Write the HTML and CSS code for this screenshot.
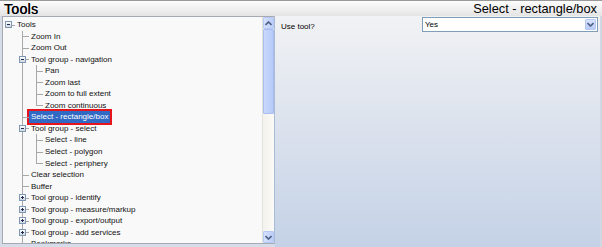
FILE: index.html
```html
<!DOCTYPE html>
<html lang="en">
<head>
    <meta charset="UTF-8">
    <title>Tools</title>
    <link rel="stylesheet" href="styles.css">
</head>
<body>
    <div class="window">
        <div class="titlebar">
            <span class="title-left">Tools</span>
            <span class="title-right">Select - rectangle/box</span>
        </div>
        <div class="main">
            <div class="tree-pane">
                <div class="tree">
                    <ul>
                        <li class="root">
                            <div class="row"><span class="toggle open"></span><span class="label">Tools</span></div>
                            <ul>
                                <li><div class="row"><span class="label">Zoom In</span></div></li>
                                <li><div class="row"><span class="label">Zoom Out</span></div></li>
                                <li>
                                    <div class="row"><span class="toggle open"></span><span class="label">Tool group - navigation</span></div>
                                    <ul>
                                        <li><div class="row"><span class="label">Pan</span></div></li>
                                        <li><div class="row"><span class="label">Zoom last</span></div></li>
                                        <li><div class="row"><span class="label">Zoom to full extent</span></div></li>
                                        <li><div class="row"><span class="label">Zoom continuous</span></div></li>
                                    </ul>
                                </li>
                                <li><div class="row"><span class="label selected">Select - rectangle/box</span></div></li>
                                <li>
                                    <div class="row"><span class="toggle open"></span><span class="label">Tool group - select</span></div>
                                    <ul>
                                        <li><div class="row"><span class="label">Select - line</span></div></li>
                                        <li><div class="row"><span class="label">Select - polygon</span></div></li>
                                        <li><div class="row"><span class="label">Select - periphery</span></div></li>
                                    </ul>
                                </li>
                                <li><div class="row"><span class="label">Clear selection</span></div></li>
                                <li><div class="row"><span class="label">Buffer</span></div></li>
                                <li><div class="row"><span class="toggle"></span><span class="label">Tool group - identify</span></div></li>
                                <li><div class="row"><span class="toggle"></span><span class="label">Tool group - measure/markup</span></div></li>
                                <li><div class="row"><span class="toggle"></span><span class="label">Tool group - export/output</span></div></li>
                                <li><div class="row"><span class="toggle"></span><span class="label">Tool group - add services</span></div></li>
                                <li><div class="row"><span class="label">Bookmarks</span></div></li>
                            </ul>
                        </li>
                    </ul>
                </div>
                <div class="vscroll">
                    <div class="sb-btn">
                        <svg width="7" height="5" viewBox="0 0 7 5"><path d="M0.5 4 L3.5 1 L6.5 4" fill="none" stroke="#4d6185" stroke-width="1.6"/></svg>
                    </div>
                    <div class="sb-thumb"></div>
                    <div class="sb-track"></div>
                    <div class="sb-btn">
                        <svg width="7" height="5" viewBox="0 0 7 5"><path d="M0.5 1 L3.5 4 L6.5 1" fill="none" stroke="#4d6185" stroke-width="1.6"/></svg>
                    </div>
                </div>
            </div>
            <div class="props">
                <div class="prop-row">
                    <span class="prop-name">Use tool?</span>
                    <div class="combo">
                        <span class="combo-value">Yes</span>
                        <span class="combo-btn">
                            <svg width="7" height="5" viewBox="0 0 7 5"><path d="M0.5 1 L3.5 4 L6.5 1" fill="none" stroke="#4d6185" stroke-width="1.6"/></svg>
                        </span>
                    </div>
                </div>
            </div>
        </div>
    </div>
</body>
</html>
```

FILE: styles.css
```css
html, body {
    margin: 0;
    padding: 0;
}
body {
    font-family: "Liberation Sans", Arial, sans-serif;
    background-color: #fff;
}
.window {
    width: 602px;
    height: 247px;
    display: flex;
    flex-direction: column;
    background-color: #d6dde8;
}
.titlebar {
    height: 15px;
    border-top: 1px solid #9a9a9a;
    background: linear-gradient(#fdfdfd, #e4e4e4);
    display: flex;
    justify-content: space-between;
    align-items: center;
    padding: 0 5px 0 4px;
    color: #000;
}
.title-left {
    font-size: 14px;
    letter-spacing: 0.3px;
    text-shadow: 0.3px 0 0 #000;
}
.title-right {
    font-size: 12.8px;
}
.main {
    flex: 1;
    display: flex;
    min-height: 0;
}
.tree-pane {
    width: 271px;
    margin-left: 2px;
    margin-bottom: 3px;
    border: 1px solid #a6abb3;
    border-right-color: #a9bcd6;
    display: flex;
    background-color: #f9f9f9;
}
.tree {
    flex: 1;
    overflow: hidden;
    font-size: 8px;
    color: #111;
    padding-top: 2px;
}
.tree ul {
    list-style: none;
    margin: 0;
    padding: 0;
}
.tree > ul {
    margin-left: 5px;
}
.tree ul ul {
    margin-left: 14px;
}
.tree li {
    position: relative;
}
.tree li::before {
    content: '';
    position: absolute;
    left: 0;
    top: 0;
    bottom: 0;
    border-left: 1px solid #a8a8a8;
}
.tree li:last-child::before {
    bottom: auto;
    height: 6px;
}
.tree li.root::before {
    display: none;
}
.row {
    position: relative;
    height: 11.55px;
    line-height: 11.55px;
    padding-left: 9px;
    white-space: nowrap;
}
.row::before {
    content: '';
    position: absolute;
    left: 0;
    top: 5.5px;
    width: 7px;
    border-top: 1px solid #a8a8a8;
}
.toggle {
    position: absolute;
    left: -3px;
    top: 2px;
    width: 7px;
    height: 7px;
    box-sizing: border-box;
    border: 1px solid #7d97b5;
    background: linear-gradient(#fff, #cdd6e0);
    z-index: 1;
}
.toggle::before {
    content: '';
    position: absolute;
    left: 1px;
    top: 2px;
    width: 3px;
    height: 1px;
    background-color: #1e2a48;
}
.toggle::after {
    content: '';
    position: absolute;
    left: 2px;
    top: 1px;
    width: 1px;
    height: 3px;
    background-color: #1e2a48;
}
.toggle.open::after {
    display: none;
}
.label {
    display: inline-block;
}
.label.selected {
    background-color: #316ac5;
    color: #fff;
    margin-left: -2px;
    padding: 0 2px;
    line-height: 12px;
    outline: 2px solid #e8141b;
}
.vscroll {
    width: 11px;
    display: flex;
    flex-direction: column;
    border-left: 1px solid #e4e4dc;
}
.sb-btn {
    height: 12px;
    box-sizing: border-box;
    border: 1px solid #b7c8f3;
    border-radius: 1px;
    background: linear-gradient(90deg, #d4e0fc, #bccdf8);
    display: flex;
    align-items: center;
    justify-content: center;
}
.sb-thumb {
    height: 85px;
    box-sizing: border-box;
    border: 1px solid #a9bdf0;
    border-radius: 1px;
    background: linear-gradient(90deg, #c9d8fc, #b6c9f7);
}
.sb-track {
    flex: 1;
    background: linear-gradient(90deg, #f3f2ec, #fbfaf6);
}
.props {
    flex: 1;
    background: linear-gradient(#f1f2f4, #c4d1e6);
    padding-top: 1px;
    border-right: 2px solid #d0d8e4;
}
.prop-row {
    display: flex;
    justify-content: space-between;
    align-items: flex-start;
    padding: 0 2px 0 6px;
}
.prop-name {
    font-size: 8px;
    padding-top: 5px;
    color: #000;
}
.combo {
    width: 176px;
    height: 15px;
    box-sizing: border-box;
    border: 1px solid #7f9db9;
    background-color: #fff;
    display: flex;
    align-items: center;
    justify-content: space-between;
    font-size: 8px;
    padding: 0 1px 0 2px;
}
.combo-btn {
    width: 11px;
    height: 11px;
    box-sizing: border-box;
    border: 1px solid #b7c8f3;
    border-radius: 1px;
    background: linear-gradient(#d8e3fd, #b9cbf8);
    display: flex;
    align-items: center;
    justify-content: center;
}
```
